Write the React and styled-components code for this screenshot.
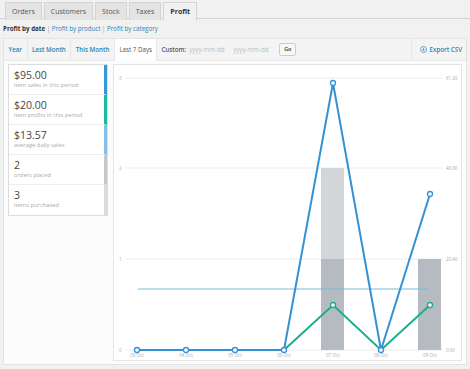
import React from "react";
import styled, { createGlobalStyle } from "styled-components";

const GlobalStyle = createGlobalStyle`
  body {
    margin: 0;
    background: #f1f1f1;
    font-family: "Open Sans", "Liberation Sans", sans-serif;
  }
`;

const Page = styled.div`
  width: 470px;
  height: 369px;
  padding: 0 3px;
  box-sizing: border-box;
  overflow: hidden;
`;

const TabBar = styled.div`
  display: flex;
  gap: 2px;
  height: 19px;
  padding: 2px 0 0 5px;
  box-sizing: border-box;
  border-bottom: 1px solid #d4d4d4;
  margin: 0 -3px;
`;

const Tab = styled.div`
  height: 17px;
  padding: 0 6px;
  line-height: 17px;
  font-size: 7px;
  color: ${(p) => (p.$active ? "#333" : "#555")};
  font-weight: ${(p) => (p.$active ? 700 : 400)};
  background: ${(p) => (p.$active ? "#f1f1f1" : "#e4e4e4")};
  border: 1px solid #d4d4d4;
  border-bottom: ${(p) => (p.$active ? "1px solid #f1f1f1" : "none")};
`;

const SubNav = styled.div`
  font-size: 6.2px;
  line-height: 19px;
  color: #999;
  a {
    color: #2a85b3;
    text-decoration: none;
  }
  strong {
    color: #333;
  }
`;

const Panel = styled.div`
  border: 1px solid #e3e3e3;
  background: #fcfcfc;
  height: 327px;
  box-sizing: border-box;
  display: flex;
  flex-direction: column;
`;

const RangeBar = styled.div`
  display: flex;
  align-items: stretch;
  height: 21px;
  background: #f4f4f4;
  border-bottom: 1px solid #e8e8e8;
  font-size: 6.2px;
  font-weight: 600;
`;

const RangeItem = styled.div`
  padding: 0 4.5px;
  line-height: 21px;
  color: ${(p) => (p.$active ? "#555" : "#2a85b3")};
  font-weight: ${(p) => (p.$active ? 400 : 600)};
  background: ${(p) => (p.$active ? "#fff" : "transparent")};
  border-right: 1px solid #e8e8e8;
  margin-bottom: ${(p) => (p.$active ? "-1px" : "0")};
`;

const Custom = styled.div`
  display: flex;
  align-items: center;
  gap: 3px;
  padding-left: 4px;
  color: #555;
  flex: 1;
  span {
    color: #bbb;
    font-weight: 400;
    width: 41px;
  }
`;

const GoButton = styled.div`
  font-size: 5.5px;
  color: #333;
  background: #f7f7f7;
  border: 1px solid #ccc;
  border-radius: 2px;
  padding: 0 4px;
  line-height: 11px;
  margin-left: 2px;
`;

const Export = styled.div`
  display: flex;
  align-items: center;
  gap: 3px;
  padding: 0 4px 0 8px;
  border-left: 1px solid #e8e8e8;
  color: #2a85b3;
`;

const Body = styled.div`
  display: flex;
  gap: 5px;
  padding: 3px 4px 4px;
  flex: 1;
`;

const Legend = styled.ul`
  list-style: none;
  margin: 0;
  padding: 0;
  width: 100px;
  align-self: flex-start;
  background: #fff;
  border: 1px solid #ddd;
  box-sizing: border-box;
`;

const LegendItem = styled.li`
  height: 30px;
  box-sizing: border-box;
  padding: 4px 5px;
  border-bottom: 1px solid #eee;
  border-right: 3px solid ${(p) => p.$color};
  &:last-child {
    border-bottom: none;
  }
`;

const Amount = styled.div`
  font-size: 10.5px;
  line-height: 12px;
  color: #464646;
`;

const Caption = styled.div`
  font-size: 5.8px;
  line-height: 9px;
  color: #aaa;
`;

const ChartBox = styled.div`
  flex: 1;
  background: #fff;
  border: 1px solid #e5e5e5;
  svg {
    display: block;
  }
`;

const legend = [
  { amount: "$95.00", caption: "item sales in this period", color: "#3498db" },
  { amount: "$20.00", caption: "item profits in this period", color: "#1abc9c" },
  { amount: "$13.57", caption: "average daily sales", color: "#85bfe8" },
  { amount: "2", caption: "orders placed", color: "#c4c8cc" },
  { amount: "3", caption: "items purchased", color: "#d9dbdd" },
];

const xs = [23, 72, 121, 170, 219, 267, 316];
const days = ["03 Oct", "04 Oct", "05 Oct", "06 Oct", "07 Oct", "08 Oct", "09 Oct"];
const sales = [285, 285, 285, 285, 18, 285, 129];
const profit = [null, null, null, 285, 240, 285, 240];
const grid = [
  { y: 13, left: "3", right: "61.20" },
  { y: 103, left: "2", right: "40.80" },
  { y: 194, left: "1", right: "20.40" },
  { y: 285, left: "0", right: "0.00" },
];

function Chart() {
  const salesPts = xs.map((x, i) => `${x},${sales[i]}`).join(" ");
  const profitPts = xs
    .map((x, i) => (profit[i] === null ? null : `${x},${profit[i]}`))
    .filter(Boolean)
    .join(" ");
  return (
    <svg width="347" height="295" viewBox="0 0 347 295">
      {grid.map((g) => (
        <g key={g.left}>
          <line x1="12" x2="329" y1={g.y} y2={g.y} stroke="#ececec" strokeWidth="1" />
          <text x="5" y={g.y + 1.5} fontSize="4.5" fill="#aaa">{g.left}</text>
          <text x="332" y={g.y + 1.5} fontSize="4.5" fill="#aaa">{g.right}</text>
        </g>
      ))}
      <rect x="207" y="103" width="23" height="91" fill="#d2d6d9" />
      <rect x="207" y="194" width="23" height="91" fill="#b5bbc1" />
      <rect x="304" y="194" width="23" height="91" fill="#b5bbc1" />
      <line x1="24" x2="315" y1="224" y2="224" stroke="#79b8e0" strokeWidth="1" />
      <polyline points={salesPts} fill="none" stroke="#3491d4" strokeWidth="2" />
      <polyline points={profitPts} fill="none" stroke="#1aae8c" strokeWidth="2" />
      {xs.map((x, i) => (
        <circle key={"s" + i} cx={x} cy={sales[i]} r="2.5" fill="#fff" stroke="#3491d4" strokeWidth="1.3" />
      ))}
      {xs.map((x, i) =>
        profit[i] === null || profit[i] === 285 ? null : (
          <circle key={"p" + i} cx={x} cy={profit[i]} r="2.5" fill="#fff" stroke="#1aae8c" strokeWidth="1.3" />
        )
      )}
      {xs.map((x, i) => (
        <text key={days[i]} x={x} y="292" fontSize="4.5" fill="#aaa" textAnchor="middle">{days[i]}</text>
      ))}
    </svg>
  );
}

export default function App() {
  return (
    <Page>
      <GlobalStyle />
      <TabBar>
        <Tab>Orders</Tab>
        <Tab>Customers</Tab>
        <Tab>Stock</Tab>
        <Tab>Taxes</Tab>
        <Tab $active>Profit</Tab>
      </TabBar>
      <SubNav>
        <strong>Profit by date</strong> | <a href="#">Profit by product</a> | <a href="#">Profit by category</a>
      </SubNav>
      <Panel>
        <RangeBar>
          <RangeItem>Year</RangeItem>
          <RangeItem>Last Month</RangeItem>
          <RangeItem>This Month</RangeItem>
          <RangeItem $active>Last 7 Days</RangeItem>
          <Custom>
            Custom:
            <span>yyyy-mm-dd</span>
            <span>yyyy-mm-dd</span>
            <GoButton>Go</GoButton>
          </Custom>
          <Export>
            <svg width="7" height="7" viewBox="0 0 14 14">
              <circle cx="7" cy="7" r="6" fill="none" stroke="#2a85b3" strokeWidth="1.4" />
              <path d="M7 3.5v6M4.5 7l2.5 2.5L9.5 7" fill="none" stroke="#2a85b3" strokeWidth="1.4" />
            </svg>
            Export CSV
          </Export>
        </RangeBar>
        <Body>
          <Legend>
            {legend.map((l) => (
              <LegendItem key={l.caption} $color={l.color}>
                <Amount>{l.amount}</Amount>
                <Caption>{l.caption}</Caption>
              </LegendItem>
            ))}
          </Legend>
          <ChartBox>
            <Chart />
          </ChartBox>
        </Body>
      </Panel>
    </Page>
  );
}
